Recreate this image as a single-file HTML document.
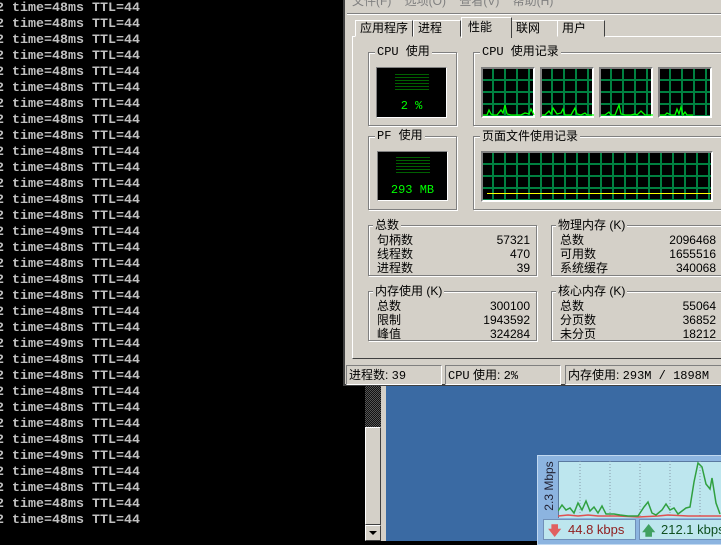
<!DOCTYPE html>
<html><head><meta charset="utf-8"><style>
*{margin:0;padding:0;box-sizing:border-box}
body{width:721px;height:541px;overflow:hidden;background:#000;position:relative;font-family:"Liberation Sans","Noto Sans CJK SC","WenQuanYi Zen Hei",sans-serif}
.con{position:absolute;left:-4px;top:1px;font-family:"Liberation Mono",monospace;font-weight:bold;font-size:13.33px;line-height:16px;color:#c0c0c0;white-space:pre}
.a{position:absolute}
.win{position:absolute;left:343px;top:-10px;width:390px;height:396px;background:#d4d0c8;border-left:2px solid #404040;border-bottom:2px solid #404040}
.t{position:absolute;font-size:12px;color:#000;line-height:14px;white-space:nowrap}
.grp{position:absolute;border:1px solid #808080;box-shadow:1px 1px 0 #fff, inset 1px 1px 0 #fff}
.lbl{position:absolute;top:-8px;left:6px;background:#d4d0c8;padding:0 2px;font-size:12px;line-height:14px;white-space:nowrap}
.disp{position:absolute;background:#000;border:1px solid;border-color:#808080 #fff #fff #808080}
.grid{position:absolute;background-color:#000;border:2px solid;border-color:#808080 #fff #fff #808080;
background-image:linear-gradient(90deg,#008040 2px,transparent 2px),linear-gradient(#008040 2px,transparent 2px);background-size:12px 12px;background-position:-3px -2px}
.tab{position:absolute;top:20px;height:17px;border:1px solid;border-color:#fff #404040 #d4d0c8 #fff;font-size:12px;line-height:15px;padding-left:4px}
.sb{position:absolute;top:365px;height:20px;border:1px solid;border-color:#808080 #fff #fff #808080;font-size:12px;line-height:18px;padding-left:2px;white-space:nowrap}
.num{position:absolute;right:6px;text-align:right}
.mon{font-family:"Liberation Mono",monospace}
</style></head><body>
<div class="con">2 time=48ms TTL=44
2 time=48ms TTL=44
2 time=48ms TTL=44
2 time=48ms TTL=44
2 time=48ms TTL=44
2 time=48ms TTL=44
2 time=48ms TTL=44
2 time=48ms TTL=44
2 time=48ms TTL=44
2 time=48ms TTL=44
2 time=48ms TTL=44
2 time=48ms TTL=44
2 time=48ms TTL=44
2 time=48ms TTL=44
2 time=49ms TTL=44
2 time=48ms TTL=44
2 time=48ms TTL=44
2 time=48ms TTL=44
2 time=48ms TTL=44
2 time=48ms TTL=44
2 time=48ms TTL=44
2 time=49ms TTL=44
2 time=48ms TTL=44
2 time=48ms TTL=44
2 time=48ms TTL=44
2 time=48ms TTL=44
2 time=48ms TTL=44
2 time=48ms TTL=44
2 time=49ms TTL=44
2 time=48ms TTL=44
2 time=48ms TTL=44
2 time=48ms TTL=44
2 time=48ms TTL=44</div>
<!-- desktop & scrollbar -->
<div class="a" style="left:381px;top:386px;width:340px;height:155px;background:#d4d0c8"></div>
<div class="a" style="left:386px;top:386px;width:335px;height:155px;background:#3a6aa3"></div>
<div class="a" style="left:365px;top:386px;width:16px;height:41px;background-color:#222;background-image:repeating-conic-gradient(#555 0 25%,#111 0 50%);background-size:2px 2px"></div>
<div class="a" style="left:365px;top:427px;width:16px;height:98px;background:#d4d0c8;border:1px solid;border-color:#fff #404040 #404040 #fff"></div>
<div class="a" style="left:365px;top:525px;width:16px;height:16px;background:#d4d0c8;border:1px solid;border-color:#fff #404040 #404040 #fff"></div>
<div class="a" style="left:369px;top:531px;width:0;height:0;border-left:4px solid transparent;border-right:4px solid transparent;border-top:4px solid #000"></div>
<!-- net widget -->
<div class="a" style="left:537px;top:455px;width:190px;height:90px;background:#8cb4e0;border:1px solid #c0d8f0"></div>
<div class="a" style="left:558px;top:461px;width:170px;height:57px;background:#bde6ee;border-left:1px solid #5a7aa0;border-top:1px solid #5a7aa0"></div>
<svg class="a" style="left:558px;top:461px" width="163" height="57">
<g stroke="#8899aa" stroke-dasharray="1,2"><line x1="22" y1="0" x2="22" y2="57"/><line x1="52" y1="0" x2="52" y2="57"/><line x1="82" y1="0" x2="82" y2="57"/><line x1="112" y1="0" x2="112" y2="57"/><line x1="142" y1="0" x2="142" y2="57"/></g>
<polyline fill="none" stroke="#e05050" stroke-width="1.5" points="0,55 10,54 20,55 30,54 40,55 60,55 80,56 100,55 110,54 130,55 150,55 163,55"/>
<polyline fill="none" stroke="#30a040" stroke-width="1.5" points="0,50 4,44 8,49 12,47 16,52 20,42 24,49 28,40 32,50 36,46 40,52 44,45 48,53 56,53 62,54 70,55 80,55 86,46 90,41 94,52 98,54 104,49 108,43 112,49 116,47 120,53 128,47 132,46 136,21 140,2 144,6 148,23 152,28 154,17 158,42 162,53"/>
</svg>
<div class="a" style="left:541px;top:459px;width:16px;height:58px"><div style="position:absolute;left:-20px;top:20px;width:56px;transform:rotate(-90deg);font-size:12px;color:#223;text-align:center">2.3 Mbps</div></div>
<div class="a" style="left:543px;top:519px;width:93px;height:21px;background:#bde6ee;border:1px solid #7090b8;font-size:13px;color:#902020;line-height:19px;padding-left:24px">44.8 kbps</div>
<div class="a" style="left:548px;top:522px;color:#e06060;font-size:13px;font-weight:bold">🡇</div>
<div class="a" style="left:639px;top:519px;width:90px;height:21px;background:#bde6ee;border:1px solid #7090b8;font-size:13px;color:#105020;line-height:19px;padding-left:21px">212.1 kbps</div>
<div class="a" style="left:642px;top:522px;color:#40a060;font-size:13px;font-weight:bold">🡅</div>
<!-- window -->
<div class="win"></div>
<div class="t" style="left:352px;top:-6px;color:#808080">文件(F)&nbsp;&nbsp;&nbsp;&nbsp;选项(O)&nbsp;&nbsp;&nbsp;&nbsp;查看(V)&nbsp;&nbsp;&nbsp;&nbsp;帮助(H)</div>
<div class="a" style="left:347px;top:13px;width:374px;height:2px;border-top:1px solid #808080;border-bottom:1px solid #fff"></div>
<div class="a" style="left:352px;top:36px;width:380px;height:323px;border:1px solid;border-color:#fff #404040 #404040 #fff"></div>
<div class="tab" style="left:355px;width:58px">应用程序</div>
<div class="tab" style="left:413px;width:48px">进程</div>
<div class="tab" style="left:511px;width:47px">联网</div>
<div class="tab" style="left:557px;width:48px">用户</div>
<div class="tab" style="left:461px;top:17px;height:21px;width:51px;background:#d4d0c8;border-bottom:none;padding-left:6px;line-height:19px">性能</div>
<!-- CPU -->
<div class="grp" style="left:368px;top:52px;width:89px;height:74px"><div class="lbl mon">CPU 使用</div></div>
<div class="disp" style="left:376px;top:67px;width:71px;height:51px"></div>
<div class="a" style="left:395px;top:74px;width:34px;height:16px;background:repeating-linear-gradient(#006000 0 1px,#000 1px 3px)"></div>
<div class="a mon" style="left:376px;top:99px;width:71px;text-align:center;color:#00ff00;font-size:12px">2 %</div>
<div class="grp" style="left:473px;top:52px;width:260px;height:74px"><div class="lbl mon">CPU 使用记录</div></div>
<div class="grid" style="left:481px;top:67px;width:54px;height:51px"></div>
<div class="grid" style="left:540px;top:67px;width:54px;height:51px"></div>
<div class="grid" style="left:599px;top:67px;width:54px;height:51px"></div>
<div class="grid" style="left:658px;top:67px;width:54px;height:51px"></div>
<svg class="a" style="left:481px;top:67px" width="240" height="51"><g fill="none" stroke="#00ff00" stroke-width="1.3">
<polyline points="2,48 6,48 8,43 10,47 12,48 16,48 20,43 22,46 24,38 26,47 30,48 40,48 44,46 48,47 50,42 53,48"/>
<polyline points="61,48 64,48 68,44 70,47 72,41 76,47 80,46 82,42 84,48 90,48 94,41 96,47 100,48 104,46 106,48 113,48"/>
<polyline points="120,48 124,48 128,45 130,48 134,48 136,43 138,38 140,47 144,48 150,48 154,47 156,48 160,44 162,46 164,48 172,48"/>
<polyline points="179,48 184,48 186,46 190,48 194,48 196,42 198,47 200,40 202,48 204,45 206,48 212,48"/></g></svg>
<!-- PF -->
<div class="grp" style="left:368px;top:136px;width:89px;height:74px"><div class="lbl mon">PF 使用</div></div>
<div class="disp" style="left:377px;top:151px;width:71px;height:50px"></div>
<div class="a" style="left:396px;top:157px;width:34px;height:16px;background:repeating-linear-gradient(#006000 0 1px,#000 1px 3px)"></div>
<div class="a mon" style="left:377px;top:183px;width:71px;text-align:center;color:#00ff00;font-size:12px">293 MB</div>
<div class="grp" style="left:473px;top:136px;width:260px;height:74px"><div class="lbl">页面文件使用记录</div></div>
<div class="grid" style="left:481px;top:151px;width:232px;height:51px"></div>
<div class="a" style="left:487px;top:193px;width:224px;height:1px;background:#ffff00"></div>
<!-- stats -->
<div class="grp" style="left:368px;top:225px;width:169px;height:51px"><div class="lbl" style="left:4px">总数</div>
<div class="t" style="left:8px;top:7px">句柄数</div><div class="t num" style="top:7px">57321</div>
<div class="t" style="left:8px;top:21px">线程数</div><div class="t num" style="top:21px">470</div>
<div class="t" style="left:8px;top:35px">进程数</div><div class="t num" style="top:35px">39</div></div>
<div class="grp" style="left:551px;top:225px;width:176px;height:51px"><div class="lbl" style="left:4px">物理内存 (K)</div>
<div class="t" style="left:8px;top:7px">总数</div><div class="t num" style="top:7px;right:10px">2096468</div>
<div class="t" style="left:8px;top:21px">可用数</div><div class="t num" style="top:21px;right:10px">1655516</div>
<div class="t" style="left:8px;top:35px">系统缓存</div><div class="t num" style="top:35px;right:10px">340068</div></div>
<div class="grp" style="left:368px;top:291px;width:169px;height:50px"><div class="lbl" style="left:4px">内存使用 (K)</div>
<div class="t" style="left:8px;top:7px">总数</div><div class="t num" style="top:7px">300100</div>
<div class="t" style="left:8px;top:21px">限制</div><div class="t num" style="top:21px">1943592</div>
<div class="t" style="left:8px;top:35px">峰值</div><div class="t num" style="top:35px">324284</div></div>
<div class="grp" style="left:551px;top:291px;width:176px;height:50px"><div class="lbl" style="left:4px">核心内存 (K)</div>
<div class="t" style="left:8px;top:7px">总数</div><div class="t num" style="top:7px;right:10px">55064</div>
<div class="t" style="left:8px;top:21px">分页数</div><div class="t num" style="top:21px;right:10px">36852</div>
<div class="t" style="left:8px;top:35px">未分页</div><div class="t num" style="top:35px;right:10px">18212</div></div>
<!-- status -->
<div class="sb" style="left:346px;width:96px">进程数: <span class="mon">39</span></div>
<div class="sb" style="left:445px;width:116px"><span class="mon">CPU</span> 使用: <span class="mon">2%</span></div>
<div class="sb" style="left:565px;width:160px">内存使用: <span class="mon">293M / 1898M</span></div>
</body></html>
